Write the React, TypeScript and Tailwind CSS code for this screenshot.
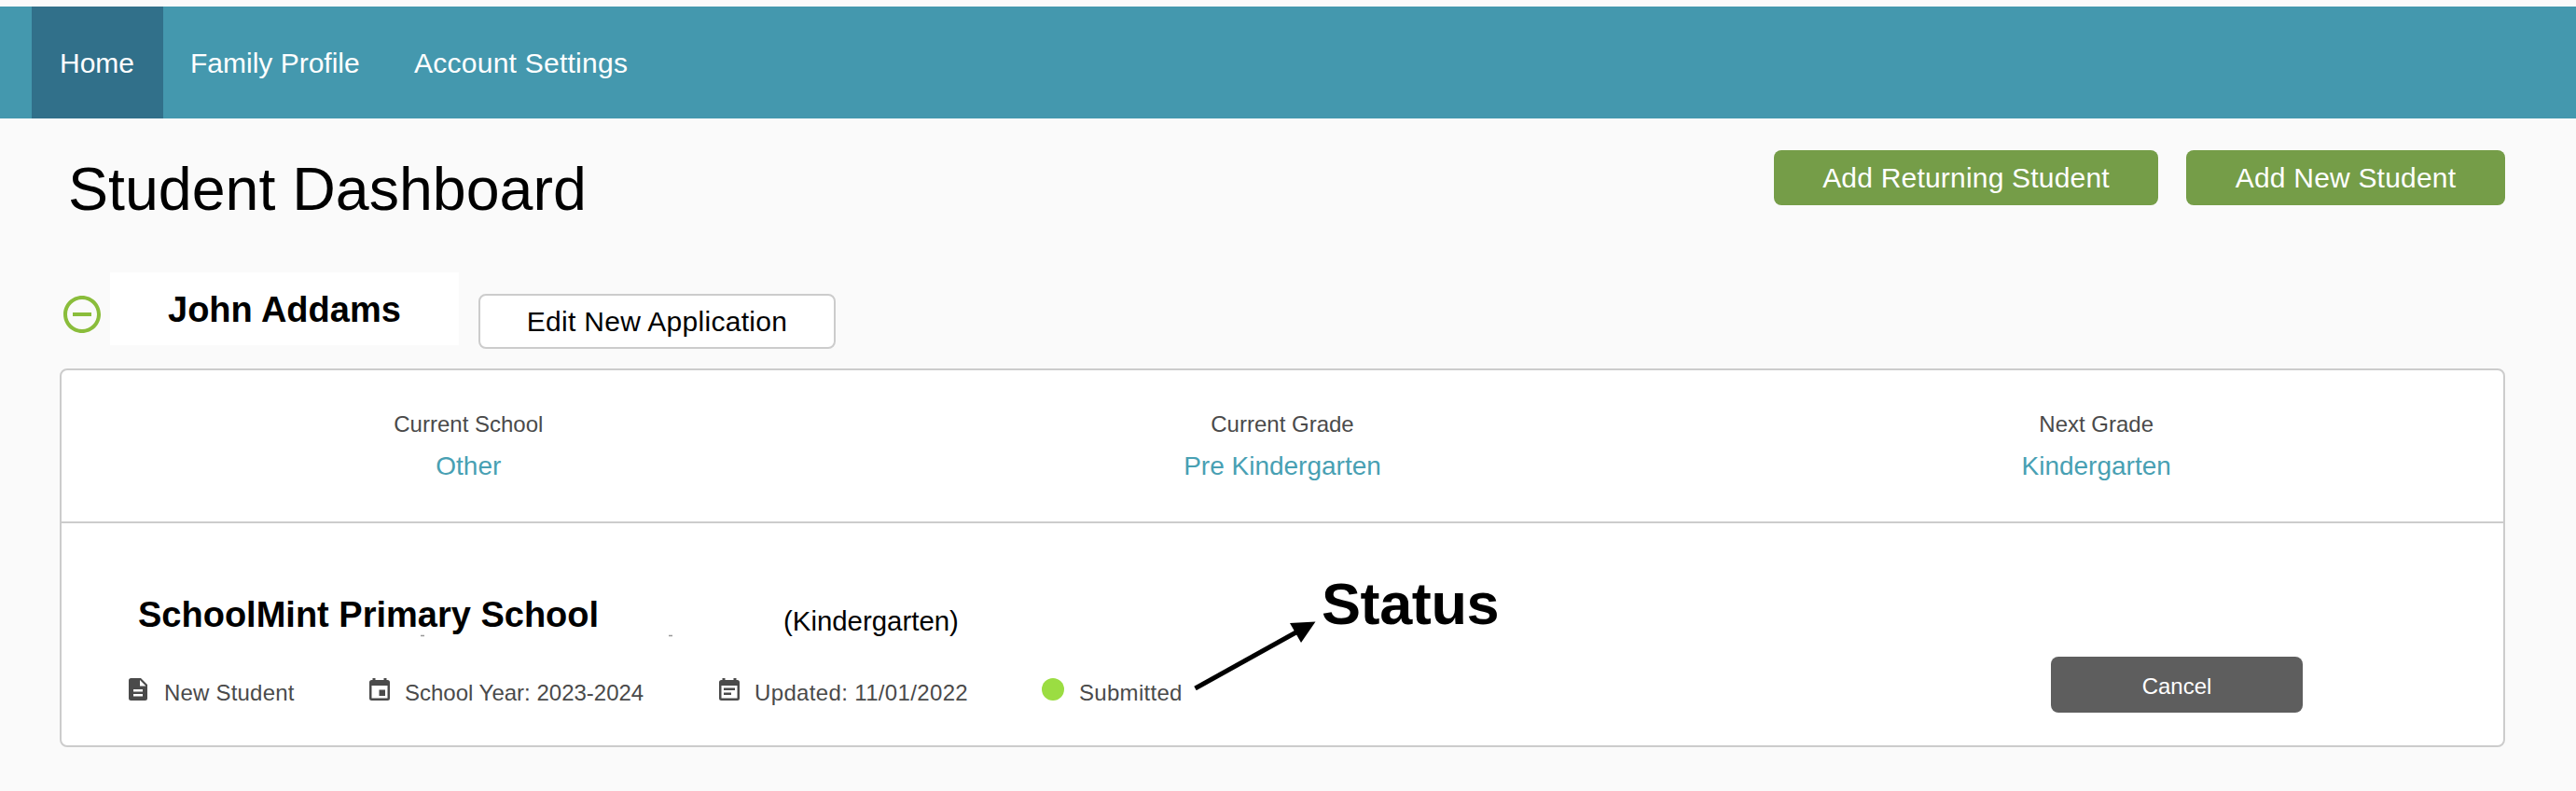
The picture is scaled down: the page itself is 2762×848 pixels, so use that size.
import { FC, ReactNode } from "react";
import clsx from "clsx";
import { MdRemoveCircleOutline } from "react-icons/md";

type NavItemProps = {
  label: string;
  active?: boolean;
  className?: string;
};

type SchoolInfoProps = {
  label: string;
  value: string;
};

type MetaItemProps = {
  icon: ReactNode;
  label: string;
  className?: string;
};

const NAV_ITEMS: NavItemProps[] = [
  { label: "Home", active: true, className: "w-[141px] pl-[30px]" },
  { label: "Family Profile", className: "w-[239px] pl-[29px]" },
  { label: "Account Settings", className: "pl-[30px] tracking-[0.25px]" },
];

const SCHOOL_INFO: SchoolInfoProps[] = [
  { label: "Current School", value: "Other" },
  { label: "Current Grade", value: "Pre Kindergarten" },
  { label: "Next Grade", value: "Kindergarten" },
];

const NavItem: FC<NavItemProps> = ({ label, active, className }) => (
  <a
    className={clsx(
      "flex h-full items-center text-[30px] whitespace-nowrap text-white",
      active && "bg-[#31708a]",
      className,
    )}
  >
    {label}
  </a>
);

const SchoolInfo: FC<SchoolInfoProps> = ({ label, value }) => (
  <div className="flex flex-col items-center pt-10">
    <span className="text-[24px] leading-9 text-[#4a4a4a]">{label}</span>
    <span className="mt-[7px] text-[28px] leading-10 text-[#48a0b3]">
      {value}
    </span>
  </div>
);

const MetaItem: FC<MetaItemProps> = ({ icon, label, className }) => (
  <div className={clsx("flex shrink-0 items-start", className)}>
    {icon}
    <span className="text-[24px] leading-8 whitespace-nowrap">{label}</span>
  </div>
);

const DocumentIcon: FC = () => (
  <svg viewBox="0 0 20 24" className="mr-[18px] h-6 w-5 shrink-0">
    <path
      fill="#4a4a4a"
      fillRule="evenodd"
      d="M2.500 0H13l7 7v14.500a2.500 2.500 0 0 1-2.500 2.500h-15A2.500 2.500 0 0 1 0 21.500v-19A2.500 2.500 0 0 1 2.500 0ZM12 2v6.500h6.500ZM5 12v2.500h10V12ZM5 17v2.500h10V17Z"
    />
  </svg>
);

const CalendarIcon: FC = () => (
  <svg viewBox="0 0 22 24" className="mr-4 h-6 w-[22px] shrink-0">
    <path
      fill="#4a4a4a"
      fillRule="evenodd"
      d="M3.500 0h3v2h9V0h3v2h1A2.500 2.500 0 0 1 22 4.500v17a2.500 2.500 0 0 1-2.500 2.500h-17A2.500 2.500 0 0 1 0 21.500v-17A2.500 2.500 0 0 1 2.500 2h1ZM2.500 8v13.500h17V8ZM10.500 12.500h6.500v6.500h-6.500Z"
    />
  </svg>
);

const NoteIcon: FC = () => (
  <svg viewBox="0 0 22 24" className="mr-4 h-6 w-[22px] shrink-0">
    <path
      fill="#4a4a4a"
      fillRule="evenodd"
      d="M3.500 0h3v2h9V0h3v2h1A2.500 2.500 0 0 1 22 4.500v17a2.500 2.500 0 0 1-2.500 2.500h-17A2.500 2.500 0 0 1 0 21.500v-17A2.500 2.500 0 0 1 2.500 2h1ZM2.500 8v13.500h17V8ZM5 10.500h12v2.500H5ZM5 15.500h8v2.500H5Z"
    />
  </svg>
);

const Header: FC = () => (
  <nav className="flex h-[120px] items-center bg-[#4498ae] pl-[34px]">
    {NAV_ITEMS.map((item) => (
      <NavItem key={item.label} {...item} />
    ))}
  </nav>
);

const StudentCard: FC = () => (
  <section className="mt-[21px] h-[406px] rounded-lg border-2 border-[#ccc] bg-white">
    <div className="grid h-[164px] grid-cols-3 border-b-2 border-[#ccc]">
      {SCHOOL_INFO.map((info) => (
        <SchoolInfo key={info.label} {...info} />
      ))}
    </div>

    <div className="relative flex h-[238px] justify-between">
      <div className="pl-[72px]">
        <div className="flex h-[166px] items-start pt-[75px] pl-[10px]">
          <h3 className="w-[692px] text-[38px] leading-[46px] font-bold text-black">
            SchoolMint Primary School
          </h3>
          <span className="mt-[10px] text-[29.4px] leading-10 text-black">
            (Kindergarten)
          </span>
        </div>
        <div className="flex text-[#4a4a4a]">
          <MetaItem
            icon={<DocumentIcon />}
            label="New Student"
            className="w-[258px] tracking-[0.2px]"
          />
          <MetaItem
            icon={<CalendarIcon />}
            label="School Year: 2023-2024"
            className="w-[375px]"
          />
          <MetaItem
            icon={<NoteIcon />}
            label="Updated: 11/01/2022"
            className="w-[346px] tracking-[0.35px]"
          />
          <MetaItem
            icon={
              <span className="mr-4 size-6 shrink-0 rounded-full bg-[#9bdd42]" />
            }
            label="Submitted"
            className="tracking-[0.3px]"
          />
        </div>
      </div>

      <button className="mt-[143px] mr-[215px] h-[60px] w-[270px] rounded-lg bg-[#5e5e5e] pt-[3px] text-[24px] text-white">
        Cancel
      </button>

      {/* small ticks under the school name */}
      <svg
        viewBox="0 0 272 3"
        className="absolute top-[119px] left-[384px] h-[3px] w-[272px]"
      >
        <path d="M1 1.500h4M267 1.500h4" stroke="#999" strokeWidth="1.500" />
      </svg>

      {/* callout pointing at the application status */}
      <svg
        viewBox="0 0 132 76"
        className="absolute top-[103px] left-[1214px] h-[76px] w-[132px]"
      >
        <path d="M1.500 74 114 11.500" stroke="#000" strokeWidth="5" />
        <path d="M130.500 2.500 103 4l12 21Z" />
      </svg>
      <span className="absolute top-[48px] left-[1351px] text-[63px] leading-[76px] font-bold tracking-[-0.4px] text-black">
        Status
      </span>
    </div>
  </section>
);

export default function App() {
  return (
    <div className="min-h-[848px] bg-[#fafafa] pt-[7px] font-['Liberation_Sans',Arial,sans-serif]">
      <Header />
      <main className="pr-[76px] pl-16">
        <div className="flex items-start justify-between">
          <h1 className="mt-[38px] pl-[9px] text-[64.5px] leading-[76px] text-black">
            Student Dashboard
          </h1>
          <div className="mt-[34px] flex gap-[30px] text-[30px] tracking-[0.2px] text-white">
            <button className="h-[59px] w-[412px] rounded-lg bg-[#759d48]">
              Add Returning Student
            </button>
            <button className="h-[59px] w-[342px] rounded-lg bg-[#759d48]">
              Add New Student
            </button>
          </div>
        </div>

        <div className="mt-[51px] flex h-[82px] items-start">
          <MdRemoveCircleOutline className="mt-[21px] size-12 text-[#8abd3b]" />
          <div className="ml-[6px] flex h-[78px] w-[374px] items-center bg-white pt-[3px] pl-[62px]">
            <h2 className="text-[38px] font-bold text-black">John Addams</h2>
          </div>
          <button className="mt-[23px] ml-[21px] h-[59px] w-[383px] rounded-lg border-2 border-[#ccc] bg-white text-[30px] tracking-[0.3px] text-black">
            Edit New Application
          </button>
        </div>
        <StudentCard />
      </main>
    </div>
  );
}
